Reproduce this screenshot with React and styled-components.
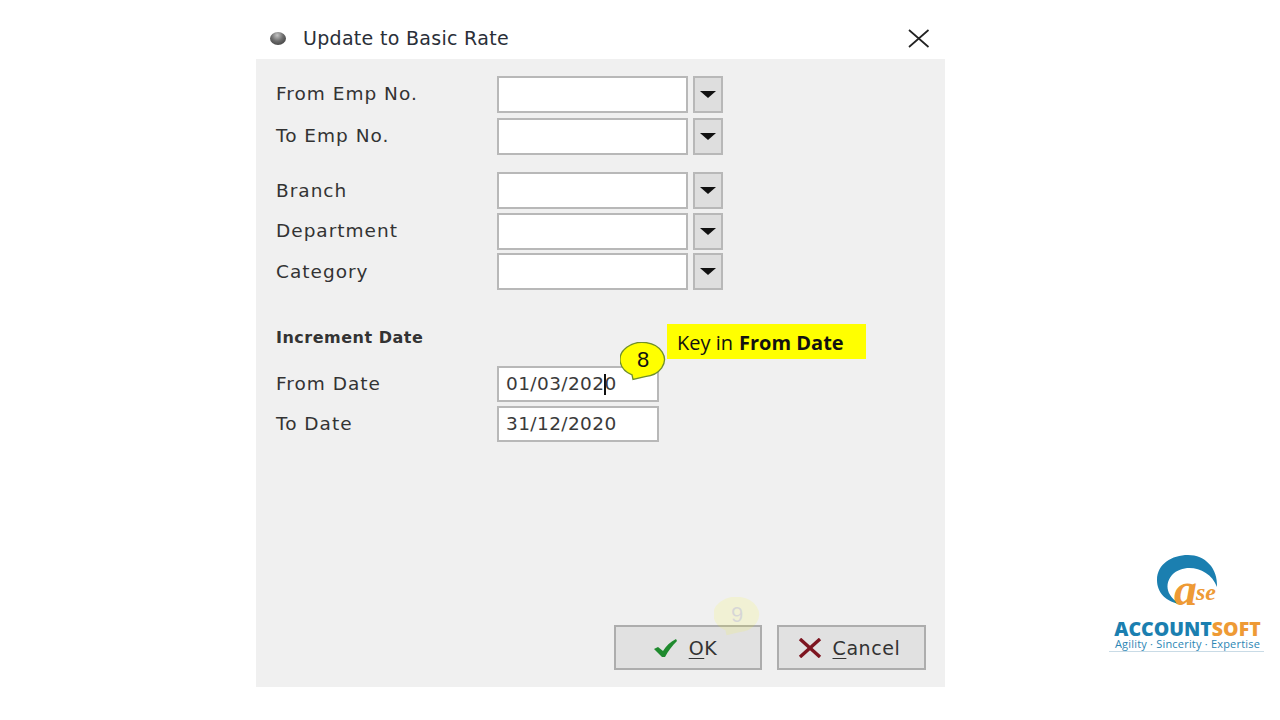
import React from 'react';
import styled, { createGlobalStyle } from 'styled-components';

const Global = createGlobalStyle`
  html, body { margin: 0; padding: 0; background: #fff; }
  body { font-family: "DejaVu Sans", Verdana, sans-serif; color: #2b2b2b; }
`;

const Page = styled.div`
  position: relative;
  width: 1280px;
  height: 720px;
  overflow: hidden;
  padding-left: 256px;
  padding-top: 17px;
  box-sizing: border-box;
`;

const Dialog = styled.div`
  width: 689px;
`;

const TitleBar = styled.div`
  height: 42px;
  display: flex;
  align-items: center;
  padding: 0 15px 0 14px;
  box-sizing: border-box;
`;

const Bullet = styled.span`
  width: 16px;
  height: 13px;
  border-radius: 50%;
  background: radial-gradient(circle at 45% 25%, #c4c4c4 0%, #6c6c6c 45%, #2e2e2e 100%);
  margin-right: 17px;
`;

const Title = styled.div`
  flex: 1;
  font-size: 19px;
  color: #2a2f38;
  letter-spacing: 0.3px;
`;

const Body = styled.div`
  height: 628px;
  background: #f0f0f0;
  padding: 17px 19px 17px 20px;
  box-sizing: border-box;
  display: flex;
  flex-direction: column;
`;

const Group = styled.div`
  display: flex;
  flex-direction: column;
  gap: ${p => p.$gap}px;
  margin-top: ${p => p.$before || 0}px;
  margin-bottom: ${p => p.$after || 0}px;
`;

const Row = styled.div`
  display: flex;
  align-items: center;
  height: ${p => p.$h || 37}px;
`;

const Label = styled.div`
  width: 221px;
  padding-bottom: ${p => p.$lift || 1}px;
  font-size: 18.5px;
  letter-spacing: 1px;
  color: #333;
`;

const GroupTitle = styled.div`
  padding-bottom: 2px;
  font-size: 16px;
  font-weight: 700;
  letter-spacing: 0.5px;
  color: #333;
`;

const Field = styled.div`
  width: ${p => p.$w}px;
  height: 100%;
  background: #fff;
  border: 2px solid #b8b8b8;
  box-sizing: border-box;
  display: flex;
  align-items: center;
  padding: 0 0 1px 7px;
  font-size: 18.5px;
  letter-spacing: 0.4px;
  color: #3a3a3a;
`;

const Caret = styled.span`
  display: inline-block;
  width: 1.5px;
  height: 21px;
  background: #111;
  margin: 1px -1.5px 0 0;
`;

const DropButton = styled.div`
  width: 30px;
  height: 100%;
  margin-left: 5px;
  background: #dedede;
  border: 2px solid #b8b8b8;
  box-sizing: border-box;
  display: flex;
  align-items: center;
  justify-content: center;
  &::after {
    content: '';
    border-left: 8px solid transparent;
    border-right: 8px solid transparent;
    border-top: 7px solid #111;
  }
`;

const Footer = styled.div`
  margin-top: auto;
  display: flex;
  justify-content: flex-end;
  gap: 15px;
`;

const Button = styled.div`
  width: ${p => p.$w}px;
  height: 45px;
  background: #e1e1e1;
  border: 2px solid #adadad;
  box-sizing: border-box;
  display: flex;
  align-items: center;
  justify-content: center;
  gap: 11px;
  padding-right: 5px;
  font-size: 19px;
  letter-spacing: 0.6px;
  color: #333;
  u { text-underline-offset: 3px; }
`;

const Bubble = styled.div`
  position: absolute;
  left: ${p => p.$x}px;
  top: ${p => p.$y}px;
  width: 46px;
  height: 36px;
  display: flex;
  align-items: center;
  justify-content: center;
  font-family: "Liberation Sans", Arial, sans-serif;
  font-size: 22px;
  color: #111;
  opacity: ${p => p.$fade || 1};
  span { position: relative; }
  svg { position: absolute; left: 0; top: 0; }
`;

const Callout = styled.div`
  position: absolute;
  left: 667px;
  top: 324px;
  width: 199px;
  height: 35px;
  background: #ffff00;
  display: flex;
  align-items: center;
  padding: 1px 0 0 10px;
  box-sizing: border-box;
  font-family: "Open Sans", "Liberation Sans", sans-serif;
  font-size: 20px;
  color: #111;
  b { margin-left: 6px; }
`;

const Logo = styled.div`
  position: absolute;
  left: 1109px;
  top: 550px;
  width: 155px;
  display: flex;
  flex-direction: column;
  align-items: center;
  svg { margin-left: 2px; }
`;

const LogoName = styled.div`
  font-family: "Open Sans", "Liberation Sans", sans-serif;
  font-weight: 800;
  font-size: 19.5px;
  line-height: 18px;
  margin-left: 2px;
  color: #1b7fb0;
  span { color: #ee9a35; }
`;

const LogoTag = styled.div`
  font-family: "Open Sans", "Liberation Sans", sans-serif;
  font-size: 11px;
  line-height: 12px;
  letter-spacing: 0.2px;
  color: #2c86b4;
  width: 100%;
  padding: 0 0 1px 2px;
  box-sizing: border-box;
  text-align: center;
  border-bottom: 1px solid #c9dbe6;
`;

const EMP_ROWS = ['From Emp No.', 'To Emp No.'];
const FILTER_ROWS = ['Branch', 'Department', 'Category'];

const ComboRow = ({ label, lift }) => (
  <Row>
    <Label $lift={lift}>{label}</Label>
    <Field $w={191} />
    <DropButton />
  </Row>
);

const BubbleShape = ({ faded }) => (
  <svg width="46" height="40" viewBox="0 0 46 40">
    <path
      d="M12 32.8 A22.2 17.2 0 1 1 25 34.6 L13 37.5 Z"
      fill="#ffff00"
      stroke={faded ? '#ffff00' : '#6f8f2a'}
      strokeWidth="1.3"
    />
  </svg>
);

export default function App() {
  return (
    <Page>
      <Global />
      <Dialog>
        <TitleBar>
          <Bullet />
          <Title>Update to Basic Rate</Title>
          <svg width="22" height="22" viewBox="0 0 22 22">
            <path d="M1 3 L20.5 20 M20.5 3 L1 20" stroke="#222" strokeWidth="1.7" fill="none" />
          </svg>
        </TitleBar>
        <Body>
          <Group $gap={5} $after={17}>
            {EMP_ROWS.map(t => <ComboRow key={t} label={t} lift={3} />)}
          </Group>
          <Group $gap={3.5} $after={38}>
            {FILTER_ROWS.map(t => <ComboRow key={t} label={t} />)}
          </Group>
          <Row $h={20}>
            <GroupTitle>Increment Date</GroupTitle>
          </Row>
          <Group $gap={4} $before={18}>
            <Row $h={36}>
              <Label>From Date</Label>
              <Field $w={162}>01/03/202<Caret />0</Field>
            </Row>
            <Row $h={36}>
              <Label>To Date</Label>
              <Field $w={162}>31/12/2020</Field>
            </Row>
          </Group>
          <Footer>
            <Button $w={148}>
              <svg width="24" height="20" viewBox="0 0 24 20">
                <path d="M0 11 L4 9 L9 13 C12 8 16 4 22 1 L23 3 C18 8 14 13 11 19 L8 19 Z" fill="#1f8a2e" />
              </svg>
              <span><u>O</u>K</span>
            </Button>
            <Button $w={149}>
              <svg width="24" height="20" viewBox="0 0 24 20">
                <path d="M2 1 L22 19 M22 1 L2 19" stroke="#7d1520" strokeWidth="3.4" fill="none" />
              </svg>
              <span><u>C</u>ancel</span>
            </Button>
          </Footer>
        </Body>
      </Dialog>

      <Bubble $x={620} $y={342}><BubbleShape /><span>8</span></Bubble>
      <Callout>Key in <b>From Date</b></Callout>
      <Bubble $x={714} $y={597} $fade={0.11}><BubbleShape faded /><span>9</span></Bubble>

      <Logo>
        <svg width="75" height="70" viewBox="0 0 75 70">
          <path
            d="M33 55 C15 52 7 42 7 30 C7 14 22 5 38 5 C55 5 68 18 67 37 C60 18 35 12 22 25 C12 37 20 50 33 55 Z"
            fill="#1b7fb0"
          />
          <text x="24" y="55" fontFamily="Liberation Serif, serif" fontStyle="italic" fontWeight="700" fontSize="46" fill="#ee9a35">a</text>
          <text x="46" y="50" fontFamily="Liberation Serif, serif" fontStyle="italic" fontWeight="700" fontSize="24" fill="#ee9a35">se</text>
        </svg>
        <LogoName>ACCOUNT<span>SOFT</span></LogoName>
        <LogoTag>Agility · Sincerity · Expertise</LogoTag>
      </Logo>
    </Page>
  );
}
